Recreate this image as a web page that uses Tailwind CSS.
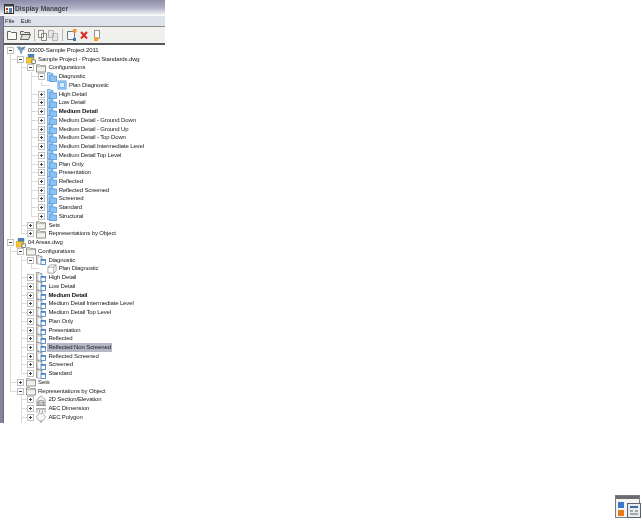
<!DOCTYPE html>
<html lang="en">

<head>
    <meta charset="UTF-8">
    <title>Display Manager</title>
    <script src="https://cdn.jsdelivr.net/npm/@tailwindcss/browser@4"></script>
</head>

<body class="bg-white w-[642px] h-[521px] overflow-hidden relative font-['Liberation_Sans',sans-serif]">
    <!-- shared icons -->
    <svg class="hidden">
        <defs>
            <symbol id="cfg" viewBox="0 0 11 11">
                <path d="M0.5 .5h3l1 1h2v8h-6z" fill="#a8d0f2" stroke="#4f8fd0" stroke-width=".7"/>
                <path d="M3 3.500h2.500l1 1h4v6H3z" fill="#8cc2f4" stroke="#3a84d4" stroke-width=".7"/>
            </symbol>
            <symbol id="cfg2" viewBox="0 0 11 11">
                <path d="M0.5 .5h3l1 1h2v8h-6z" fill="#f4f4f0" stroke="#787878" stroke-width=".8"/>
                <path d="M2 2h2l1 1h1v7H2z" fill="#fff" stroke="#989898" stroke-width=".6"/>
                <rect x="5.500" y="5" width="5" height="5.500" fill="#fff" stroke="#3a78c0" stroke-width=".9"/>
                <path d="M5.500 5.700h5" stroke="#3a78c0" stroke-width="1.200"/>
            </symbol>
            <symbol id="view" viewBox="0 0 11 11">
                <rect x="1" y="1" width="9" height="9" fill="#a8d4f8" stroke="#4f94d8" stroke-width=".8"/>
                <rect x="3" y="3" width="5" height="5" fill="#d4ecff" stroke="#4f94d8" stroke-width=".6"/>
            </symbol>
            <symbol id="view2" viewBox="0 0 11 11">
                <path d="M1 3.500h6.500V10H1zM1 3.500L3.500 1H10v6.500L7.500 10M7.500 3.500L10 1" fill="#fff" stroke="#787878" stroke-width=".7"/>
            </symbol>
            <symbol id="folder" viewBox="0 0 11 11">
                <path d="M.5 2h3.500l1 1h5.500v7H.5z" fill="#f2f2ea" stroke="#6c6c6c" stroke-width=".8"/>
                <path d="M.5 4h10" stroke="#8c8c8c" stroke-width=".6"/>
            </symbol>
            <symbol id="proj" viewBox="0 0 11 11">
                <path d="M1 2l5 1.500L10 2 7 6 5.500 9.500 4.500 6z" fill="#7fb4dc" stroke="#50708c" stroke-width=".7"/>
                <path d="M3 1l4 3 3 1M2 5l6-2" stroke="#5f6f80" stroke-width=".6" fill="none"/>
            </symbol>
            <symbol id="dwg" viewBox="0 0 11 11">
                <rect x="2" y="0" width="7" height="5" fill="#4a80b8"/>
                <rect x="0" y="4" width="8" height="6" fill="#f4c838" stroke="#b08820" stroke-width=".5"/>
                <rect x="6.500" y="6.500" width="4" height="4" fill="#fff" stroke="#404040" stroke-width=".7"/>
            </symbol>
            <symbol id="sect" viewBox="0 0 11 11">
                <path d="M1 10V5l4.500-4L10 5v5zM3 10V6h5v4M1 8h9" fill="#f8f8f8" stroke="#707070" stroke-width=".7"/>
            </symbol>
            <symbol id="dim" viewBox="0 0 11 11">
                <path d="M0 2.500h11M0 6.500h11" stroke="#505050" stroke-width=".9"/>
                <path d="M1 8v2.500M4 8v2.500M7 8v2.500M10 8v2.500" stroke="#707070" stroke-width=".9"/>
            </symbol>
            <symbol id="poly" viewBox="0 0 11 11">
                <path d="M3 1.500h5l2.500 4L8 9.500H3L.5 5.500z" fill="#f6f6f6" stroke="#909090" stroke-width=".7"/>
            </symbol>
            <symbol id="anchor" viewBox="0 0 11 11">
                <path d="M1 5h9M3 3v7M8 3v7M5.500 0v5" stroke="#606060" stroke-width=".9"/>
            </symbol>
        </defs>
    </svg>

    <div class="w-[165px] h-[423px] flex flex-col overflow-hidden">
        <!-- title bar -->
        <div class="h-[16px] shrink-0 pl-[4px] flex items-center gap-[1px] bg-gradient-to-b from-[#8c8ca8] via-[#b0b2c8] to-white">
            <svg width="10" height="10" viewBox="0 0 10 10" class="mt-[2px]">
                <rect x=".5" y=".5" width="9" height="9" fill="#fff" stroke="#303030"/>
                <rect x=".5" y=".5" width="9" height="2" fill="#404040"/>
                <rect x="2" y="4" width="2" height="2" fill="#c83020"/>
                <rect x="2" y="7" width="2" height="2" fill="#c89020"/>
                <rect x="5" y="4" width="3" height="5" fill="#5080b0"/>
            </svg>
            <span class="text-[6.7px] leading-none font-bold text-[#444] mt-[3px] blur-[0.3px]">Display Manager</span>
        </div>

        <div class="flex-1 flex min-h-0">
            <!-- window edge -->
            <div class="w-[4px] shrink-0 bg-[#85859c] border-r border-[#6a6a78]"></div>

            <div class="flex-1 min-w-0 flex flex-col">
                <!-- menu -->
                <div class="h-[11px] shrink-0 bg-[#dde1ec] border-b border-[#8a8a8a] flex items-center gap-[6px] pl-[1px] pt-[1px] text-[6px] text-[#222] blur-[0.25px]">
                    <span>File</span>
                    <span>Edit</span>
                </div>

                <!-- toolbar -->
                <div class="h-[18px] shrink-0 bg-[#f0f0ec] border-b-2 border-[#55555a] flex items-center pl-[3px]">
                    <svg width="100" height="12" viewBox="0 0 100 12">
                        <path d="M.5 2.500h3l1 1h5v7H.5z" fill="#fbfbf4" stroke="#555" stroke-width=".9"/>
                        <path d="M13.500 2.500h3l1 1h5v2h-9z M13.500 10.500l2-5h8l-2 5z" fill="#e4e4d8" stroke="#555" stroke-width=".9"/>
                        <path d="M27.500 0v12" stroke="#b4b4b4"/>
                        <path d="M31.500 1.500h5v7h-5z M34.500 4.500h5v7h-5z" fill="#f8f8f8" stroke="#7a7a7a" stroke-width=".9"/>
                        <path d="M41.500 1.500h5v7h-5z M45.500 4.500h5v7h-5z" fill="#e8e8e8" stroke="#b0b0b0" stroke-width=".9"/>
                        <path d="M55.500 0v12" stroke="#b4b4b4"/>
                        <path d="M60.500 2.500h7v8h-7z" fill="#f8f8f8" stroke="#667" stroke-width=".9"/>
                        <rect x="66" y="0" width="3.500" height="3.500" fill="#f09828"/>
                        <rect x="66" y="9" width="3" height="3" fill="#3878c0"/>
                        <path d="M74 3l6 6.500M80 3l-6 6.500" stroke="#d82a20" stroke-width="2"/>
                        <path d="M87.500 1.500h5v8h-5z" fill="#fafafa" stroke="#888" stroke-width=".9"/>
                        <rect x="87" y="8" width="4" height="4" fill="#f0a030"/>
                    </svg>
                </div>

                <!-- tree -->
                <div id="tree" class="flex-1 min-h-0 overflow-hidden bg-white pt-[1px] text-[6px] tracking-[-0.13px] text-[#222]"></div>
            </div>
        </div>
    </div>

    <!-- corner icon -->
    <svg class="absolute left-[615px] top-[495px]" width="26" height="24" viewBox="0 0 26 24">
        <rect x=".5" y=".5" width="24" height="22" fill="#f4f4f4" stroke="#7c7c7c"/>
        <rect x="1" y="1" width="23" height="3" fill="#6c6c70"/>
        <rect x="3" y="7" width="6" height="6" fill="#3c78c8"/>
        <rect x="3" y="15" width="6" height="6" fill="#e87a18"/>
        <rect x="12.500" y="8.500" width="13" height="14" fill="#e8eaf0" stroke="#5c6470"/>
        <rect x="15" y="11" width="8" height="2" fill="#3c6aa8"/>
        <path d="M15 16h3M20 16h3M15 19h8" stroke="#60666e"/>
    </svg>

    <script>
        // level, label, icon, expander ('+', '-', ''), extra
        const rows = [
            [0, '00000-Sample Project 2011', 'proj', '-'],
            [1, 'Sample Project - Project Standards.dwg', 'dwg', '-'],
            [2, 'Configurations', 'folder', '-'],
            [3, 'Diagnostic', 'cfg', '-'],
            [4, 'Plan Diagnostic', 'view', ''],
            [3, 'High Detail', 'cfg', '+'],
            [3, 'Low Detail', 'cfg', '+'],
            [3, 'Medium Detail', 'cfg', '+', 'bold'],
            [3, 'Medium Detail - Ground Down', 'cfg', '+'],
            [3, 'Medium Detail - Ground Up', 'cfg', '+'],
            [3, 'Medium Detail - Top Down', 'cfg', '+'],
            [3, 'Medium Detail Intermediate Level', 'cfg', '+'],
            [3, 'Medium Detail Top Level', 'cfg', '+'],
            [3, 'Plan Only', 'cfg', '+'],
            [3, 'Presentation', 'cfg', '+'],
            [3, 'Reflected', 'cfg', '+'],
            [3, 'Reflected Screened', 'cfg', '+'],
            [3, 'Screened', 'cfg', '+'],
            [3, 'Standard', 'cfg', '+'],
            [3, 'Structural', 'cfg', '+'],
            [2, 'Sets', 'folder', '+'],
            [2, 'Representations by Object', 'folder', '+'],
            [0, '04 Areas.dwg', 'dwg', '-'],
            [1, 'Configurations', 'folder', '-'],
            [2, 'Diagnostic', 'cfg2', '-'],
            [3, 'Plan Diagnostic', 'view2', ''],
            [2, 'High Detail', 'cfg2', '+'],
            [2, 'Low Detail', 'cfg2', '+'],
            [2, 'Medium Detail', 'cfg2', '+', 'bold'],
            [2, 'Medium Detail Intermediate Level', 'cfg2', '+'],
            [2, 'Medium Detail Top Level', 'cfg2', '+'],
            [2, 'Plan Only', 'cfg2', '+'],
            [2, 'Presentation', 'cfg2', '+'],
            [2, 'Reflected', 'cfg2', '+'],
            [2, 'Reflected Non Screened', 'cfg2', '+', 'sel'],
            [2, 'Reflected Screened', 'cfg2', '+'],
            [2, 'Screened', 'cfg2', '+'],
            [2, 'Standard', 'cfg2', '+'],
            [1, 'Sets', 'folder', '+'],
            [1, 'Representations by Object', 'folder', '-'],
            [2, '2D Section/Elevation', 'sect', '+'],
            [2, 'AEC Dimension', 'dim', '+'],
            [2, 'AEC Polygon', 'poly', '+'],
            [2, 'Anchor Bubble to Column Grid', 'anchor', '+'],
        ];

        const STEP = 10.3;
        const exp = (s) => `<span class="absolute top-[1px] w-[7px] h-[7px] bg-white border border-[#c0c0c0] z-10" style="left:-3.5px">
            <span class="absolute left-[1px] top-[2px] w-[3px] h-px bg-[#444]"></span>
            ${s === '+' ? '<span class="absolute left-[2px] top-[1px] w-px h-[3px] bg-[#444]"></span>' : ''}
        </span>`;

        document.getElementById('tree').innerHTML = rows.map((r, i) => {
            const [lvl, label, icon, e, extra] = r;
            const x = 6.3 + lvl * STEP; // expander centre, relative to tree
            let guides = '';
            for (let l = 0; l < lvl; l++) {
                // a guide carries on while a later row still sits at level l+1 under the same parent
                let on = l === 0 && i < 22;
                for (let j = i + 1; j < rows.length && rows[j][0] > l; j++) {
                    if (rows[j][0] === l + 1) { on = true; break; }
                }
                if (on || l === lvl - 1) {
                    const h = on ? 'h-full' : 'h-[50%]';
                    guides += `<span class="absolute top-0 w-0 border-l border-[#dcdcdc] ${h}" style="left:${6.3 + l * STEP}px"></span>`;
                }
            }
            if (lvl === 0 && i < 22) {
                guides += `<span class="absolute top-0 w-0 border-l border-[#dcdcdc] h-full" style="left:6.3px"></span>`;
            }
            if (lvl > 0) {
                guides += `<span class="absolute top-[4px] w-[8px] border-t border-[#dcdcdc]" style="left:${x - STEP}px"></span>`;
            }
            const cls = extra === 'bold' ? 'font-bold text-[#111]' : extra === 'sel' ? 'bg-[#b6b6c6] text-[#222]' : '';
            return `<div class="relative h-[8.74px] flex items-center" style="padding-left:${x + 5.5}px">
                ${guides}
                <span class="absolute top-0 left-0 h-full" style="margin-left:${x}px">${e ? exp(e) : ''}</span>
                <svg class="relative shrink-0 w-[10px] h-[10px]"><use href="#${icon}"></use></svg>
                <span class="ml-[1px] px-[1px] whitespace-nowrap leading-[8.74px] blur-[0.25px] ${cls}">${label}</span>
            </div>`;
        }).join('');
    </script>
</body>

</html>
